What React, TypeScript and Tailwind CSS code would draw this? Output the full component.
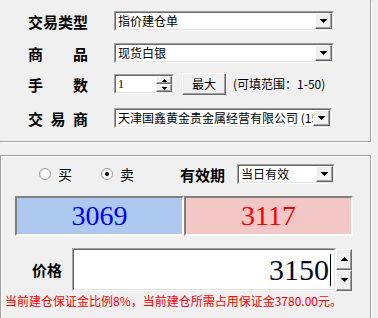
import React from "react";

const cjk = "font-['SimSun','Noto_Sans_CJK_SC',sans-serif]";

const Arrow = ({ up }: { up?: boolean }) => (
  <svg width="7" height="4" viewBox="0 0 7 4" shapeRendering="crispEdges">
    <path
      d={
        up
          ? "M3 0h1v1h1v1h1v1h1v1h-7v-1h1v-1h1v-1h1z"
          : "M0 0h7v1h-1v1h-1v1h-1v1h-1v-1h-1v-1h-1v-1h-1z"
      }
      fill="#000"
    />
  </svg>
);

const SmallArrow = ({ up }: { up?: boolean }) => (
  <svg width="5" height="3" viewBox="0 0 5 3" shapeRendering="crispEdges">
    <path d={up ? "M2 0h1v1h1v1h1v1h-5v-1h1v-1h1z" : "M0 0h5v1h-1v1h-1v1h-1v-1h-1v-1h-1z"} fill="#000" />
  </svg>
);

const raised =
  "border border-t-white border-l-white border-r-[#696969] border-b-[#696969] bg-[#f0f0f0] shadow-[inset_-1px_-1px_0_#a0a0a0]";

const Combo = ({ text, w }: { text: string; w: string }) => (
  <div className={`flex h-[20px] ${w} border border-t-[#a0a0a0] border-l-[#a0a0a0] border-r-white border-b-white`}>
    <div className="flex flex-1 min-w-0 items-center border border-t-[#696969] border-l-[#696969] border-r-[#e3e3e3] border-b-[#e3e3e3] bg-white">
      <span className={`flex-1 min-w-0 overflow-hidden whitespace-nowrap pl-[2px] text-[12px] leading-[16px] text-black ${cjk}`}>
        {text}
      </span>
      <div className={`flex h-[16px] w-[17px] shrink-0 items-center justify-center ${raised}`}>
        <Arrow />
      </div>
    </div>
  </div>
);

const Label = ({ chars }: { chars: string[] }) => (
  <div className={`ml-[28px] mr-[26px] flex w-[60px] justify-between text-[15px] font-bold leading-none text-black ${cjk}`}>
    {chars.map((c, i) => (
      <span key={i}>{c}</span>
    ))}
  </div>
);

const Radio = ({ on }: { on?: boolean }) => (
  <div className="flex size-[12px] items-center justify-center rounded-full border border-[#a0a0a0] bg-white shadow-[inset_1px_1px_0_#e3e3e3]">
    {on && <div className="size-[4px] rounded-full bg-black" />}
  </div>
);

export default function App() {
  return (
    <div className={`h-[318px] w-[378px] overflow-hidden bg-[#f0f0f0] ${cjk}`}>
      {/* top panel */}
      <div className="h-[142px] w-[371px] border-r border-b border-[#a0a0a0] pt-[11px] shadow-[1px_1px_0_#fff]">
        <div className="flex h-[20px] items-center">
          <Label chars={["交", "易", "类", "型"]} />
          <Combo text="指价建仓单" w="w-[220px]" />
        </div>
        <div className="mt-[12px] flex h-[20px] items-center">
          <Label chars={["商", "品"]} />
          <Combo text="现货白银" w="w-[220px]" />
        </div>
        <div className="mt-[10px] flex h-[22px] items-center">
          <Label chars={["手", "数"]} />
          <div className="flex h-[20px] w-[60px] border border-t-[#a0a0a0] border-l-[#a0a0a0] border-r-white border-b-white">
            <div className="flex flex-1 items-center border border-t-[#696969] border-l-[#696969] border-r-[#e3e3e3] border-b-[#e3e3e3] bg-white">
              <span className="flex-1 pl-[2px] text-[12px] leading-none font-['Liberation_Serif',serif]">1</span>
              <div className="flex h-[16px] w-[16px] flex-col">
                <div className={`flex h-[8px] items-center justify-center ${raised}`}>
                  <SmallArrow up />
                </div>
                <div className={`flex h-[8px] items-center justify-center ${raised}`}>
                  <SmallArrow />
                </div>
              </div>
            </div>
          </div>
          <button className={`ml-[8px] flex h-[22px] w-[44px] items-center justify-center text-[12px] leading-none ${raised}`}>
            最大
          </button>
          <span className="ml-[7px] text-[12px] leading-none text-black">(可填范围：1-50)</span>
        </div>
        <div className="mt-[13px] flex h-[20px] items-center">
          <Label chars={["交", "易", "商"]} />
          <Combo text="天津国鑫黄金贵金属经营有限公司 (15" w="w-[218px]" />
        </div>
      </div>

      {/* order panel */}
      <div className="mt-[13px] h-[170px] w-[371px] border-t border-r border-l border-[#a0a0a0] pt-[8px] shadow-[inset_1px_1px_0_#fff,1px_0_0_#fff]">
        <div className="flex h-[20px] items-center">
          <div className="ml-[38px]">
            <Radio />
          </div>
          <span className="ml-[7px] text-[14px] leading-none">买</span>
          <div className="ml-[29px]">
            <Radio on />
          </div>
          <span className="ml-[7px] text-[14px] leading-none">卖</span>
          <span className="ml-[46px] text-[15px] font-bold leading-none">有效期</span>
          <div className="ml-[12px]">
            <Combo text="当日有效" w="w-[98px]" />
          </div>
        </div>

        <div className="ml-[14px] mt-[12px] flex h-[40px] w-[338px]">
          <div className="flex flex-1 items-center justify-center border-2 border-t-[#808080] border-l-[#808080] border-r-white border-b-white bg-[#adc9ef]">
            <span className="text-[28px] leading-none text-[#0000ff] font-['Liberation_Serif',serif]">3069</span>
          </div>
          <div className="flex flex-1 items-center justify-center border-2 border-t-[#808080] border-l-[#808080] border-r-white border-b-white bg-[#f4c7c7]">
            <span className="text-[28px] leading-none text-[#ff0000] font-['Liberation_Serif',serif]">3117</span>
          </div>
        </div>

        <div className="mt-[12px] flex h-[43px] items-center">
          <span className="ml-[31px] w-[40px] text-[15px] font-bold leading-none">价格</span>
          <div className="flex h-[43px] w-[264px] border border-t-[#a0a0a0] border-l-[#a0a0a0] border-r-white border-b-white">
            <div className="flex flex-1 items-center justify-end border border-t-[#696969] border-l-[#696969] border-r-[#e3e3e3] border-b-[#e3e3e3] bg-white pr-[3px]">
              <span className="text-[30px] leading-none text-[#0a0a1e] font-['Liberation_Serif',serif]">3150</span>
              <div className="ml-[1px] h-[32px] w-[1px] bg-black" />
            </div>
          </div>
          <div className="flex h-[42px] w-[16px] flex-col">
            <div className={`flex h-[21px] items-center justify-center ${raised}`}>
              <Arrow up />
            </div>
            <div className={`flex h-[21px] items-center justify-center ${raised}`}>
              <Arrow />
            </div>
          </div>
        </div>

        <div className="ml-[4px] mt-[4px] whitespace-nowrap text-[12px] leading-[12px] text-[#ff0000]">
          当前建仓保证金比例8%，当前建仓所需占用保证金3780.00元。
        </div>
      </div>
    </div>
  );
}
